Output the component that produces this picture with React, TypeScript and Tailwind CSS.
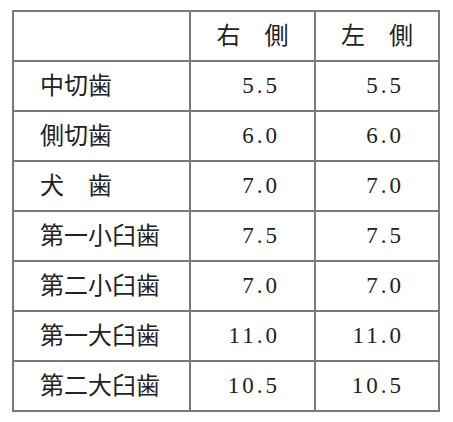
const rows = [
  ["中切歯", "5.5", "5.5"],
  ["側切歯", "6.0", "6.0"],
  ["犬　歯", "7.0", "7.0"],
  ["第一小臼歯", "7.5", "7.5"],
  ["第二小臼歯", "7.0", "7.0"],
  ["第一大臼歯", "11.0", "11.0"],
  ["第二大臼歯", "10.5", "10.5"],
]

export default function App() {
  return (
    <div className="min-h-[422px] bg-white pl-[12px] pt-[10px]" style={{ fontFamily: '"Liberation Serif", "Noto Sans CJK JP", serif' }}>
      <table className="w-[428px] border-collapse border-2 border-[#7a7a7a] text-[#222]">
        <thead>
          <tr className="h-[50px]">
            <th className="w-[177px] border-2 border-[#7a7a7a]"></th>
            <th className="w-[125px] border-2 border-[#7a7a7a] text-center text-[24px] font-normal">右　側</th>
            <th className="border-2 border-[#7a7a7a] text-center text-[24px] font-normal">左　側</th>
          </tr>
        </thead>
        <tbody>
          {rows.map((r) => (
            <tr key={r[0]} className="h-[50px]">
              <td className="border-2 border-[#7a7a7a] pl-[26px] text-left text-[24px]">{r[0]}</td>
              <td className="border-2 border-[#7a7a7a] pr-[34px] text-right text-[23px] tracking-[3px]">{r[1]}</td>
              <td className="border-2 border-[#7a7a7a] pr-[34px] text-right text-[23px] tracking-[3px]">{r[2]}</td>
            </tr>
          ))}
        </tbody>
      </table>
    </div>
  )
}
